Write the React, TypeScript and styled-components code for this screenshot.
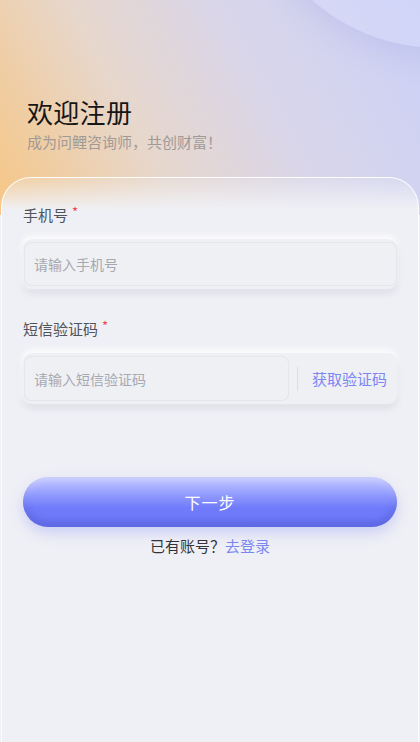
import React from "react";
import styled, { createGlobalStyle } from "styled-components";

const Global = createGlobalStyle`
  html, body { margin: 0; padding: 0; }
  body { font-family: "Noto Sans CJK SC", "Noto Sans", sans-serif; background: #eff0f5; }
  * { box-sizing: border-box; }
`;

const Page = styled.div`
  position: relative;
  width: 420px;
  min-height: 742px;
  overflow: hidden;
  display: flex;
  flex-direction: column;
  background-color: #eff0f5;
  background-image: linear-gradient(62deg, #f6c685 0%, #e7d7cc 34%, #d9d6ea 62%, #cbd0f6 100%);
  background-size: 100% 215px;
  background-repeat: no-repeat;
`;

const Bubble = styled.div`
  position: absolute;
  left: 245px;
  top: -342px;
  width: 390px;
  height: 390px;
  border-radius: 50%;
  background: rgba(215, 218, 250, 0.55);
  box-shadow: 0 10px 26px rgba(150, 155, 225, 0.22);
  pointer-events: none;
`;

const Header = styled.header`
  position: relative;
  padding: 94px 27px 0;
  height: 177px;
`;

const Title = styled.h1`
  margin: 0;
  font-size: 26px;
  font-weight: 400;
  line-height: 36px;
  color: #161616;
  letter-spacing: 0.3px;
`;

const Subtitle = styled.p`
  margin: 1px 0 0;
  font-size: 15px;
  line-height: 22px;
  color: #a09a96;
`;

const Card = styled.main`
  position: relative;
  flex: 1;
  margin: 0 1px;
  padding: 26px 21px 40px;
  border-radius: 30px 30px 0 0;
  border: 1px solid rgba(255, 255, 255, 0.85);
  border-bottom: none;
  background: linear-gradient(
    to bottom,
    rgba(239, 240, 245, 0.2) 0px,
    rgba(239, 240, 245, 0.75) 22px,
    #eff0f5 32px,
    #eff0f5 100%
  );
  display: flex;
  flex-direction: column;
`;

const Field = styled.div<{ $gap?: number }>`
  display: flex;
  flex-direction: column;
  margin-bottom: ${(p) => p.$gap ?? 0}px;
`;

const Label = styled.label`
  font-size: 15px;
  line-height: 22px;
  color: #50545b;
  margin-bottom: 13px;
  display: flex;
  align-items: flex-start;
`;

const Star = styled.span`
  color: #f0464a;
  font-size: 13px;
  margin-left: 4px;
  line-height: 16px;
`;

const Shell = styled.div<{ $h: number }>`
  height: ${(p) => p.$h}px;
  border-radius: 9px;
  background: #eff0f4;
  padding: 3px 0 3px 1px;
  display: flex;
  align-items: stretch;
  box-shadow: 0 4px 7px rgba(120, 125, 150, 0.16), 0 -3px 6px rgba(255, 255, 255, 0.95),
    -2px 0 4px rgba(255, 255, 255, 0.7);
`;

const InputBox = styled.input<{ $w?: number }>`
  ${(p) => (p.$w ? `width: ${p.$w}px; flex: none;` : "flex: 1; min-width: 0;")}
  border: 1px solid rgba(205, 208, 220, 0.3);
  border-radius: 7px;
  background: #eff0f4;
  padding: 0 9px;
  font-family: inherit;
  font-size: 14px;
  color: #333;
  outline: none;
  &::placeholder { color: #a6a9b1; }
`;

const Divider = styled.div`
  width: 1px;
  height: 24px;
  align-self: center;
  background: #dcdee6;
  margin-left: 8px;
`;

const CodeButton = styled.button`
  flex: 1;
  border: none;
  background: transparent;
  font-family: inherit;
  font-size: 15px;
  color: #7c86f2;
  text-align: right;
  padding: 0 10px 0 0;
  cursor: pointer;
`;

const Primary = styled.button`
  margin-top: 73px;
  height: 50px;
  width: 100%;
  border: none;
  border-radius: 25px;
  font-family: inherit;
  font-size: 16px;
  color: #ffffff;
  letter-spacing: 1px;
  background: linear-gradient(to bottom, #c4c9ff 0%, #8e98fd 38%, #6f7bfa 62%, #6d78f6 100%);
  box-shadow: 0 6px 14px rgba(110, 122, 250, 0.28), inset 0 -5px 7px rgba(70, 78, 200, 0.45),
    inset 0 3px 6px rgba(255, 255, 255, 0.25);
  cursor: pointer;
`;

const Footer = styled.p`
  margin: 8px 0 0;
  text-align: center;
  font-size: 15px;
  line-height: 22px;
  color: #333438;
`;

const Link = styled.a`
  color: #7c86f2;
  text-decoration: none;
`;

export default function App() {
  return (
    <>
      <Global />
      <Page>
        <Bubble />
        <Header>
          <Title>欢迎注册</Title>
          <Subtitle>成为问鲤咨询师，共创财富！</Subtitle>
        </Header>
        <Card>
          <Field $gap={29}>
            <Label>
              手机号<Star>*</Star>
            </Label>
            <Shell $h={50}>
              <InputBox placeholder="请输入手机号" />
            </Shell>
          </Field>
          <Field>
            <Label>
              短信验证码<Star>*</Star>
            </Label>
            <Shell $h={51}>
              <InputBox $w={265} placeholder="请输入短信验证码" />
              <Divider />
              <CodeButton>获取验证码</CodeButton>
            </Shell>
          </Field>
          <Primary>下一步</Primary>
          <Footer>
            已有账号？<Link href="#">去登录</Link>
          </Footer>
        </Card>
      </Page>
    </>
  );
}
